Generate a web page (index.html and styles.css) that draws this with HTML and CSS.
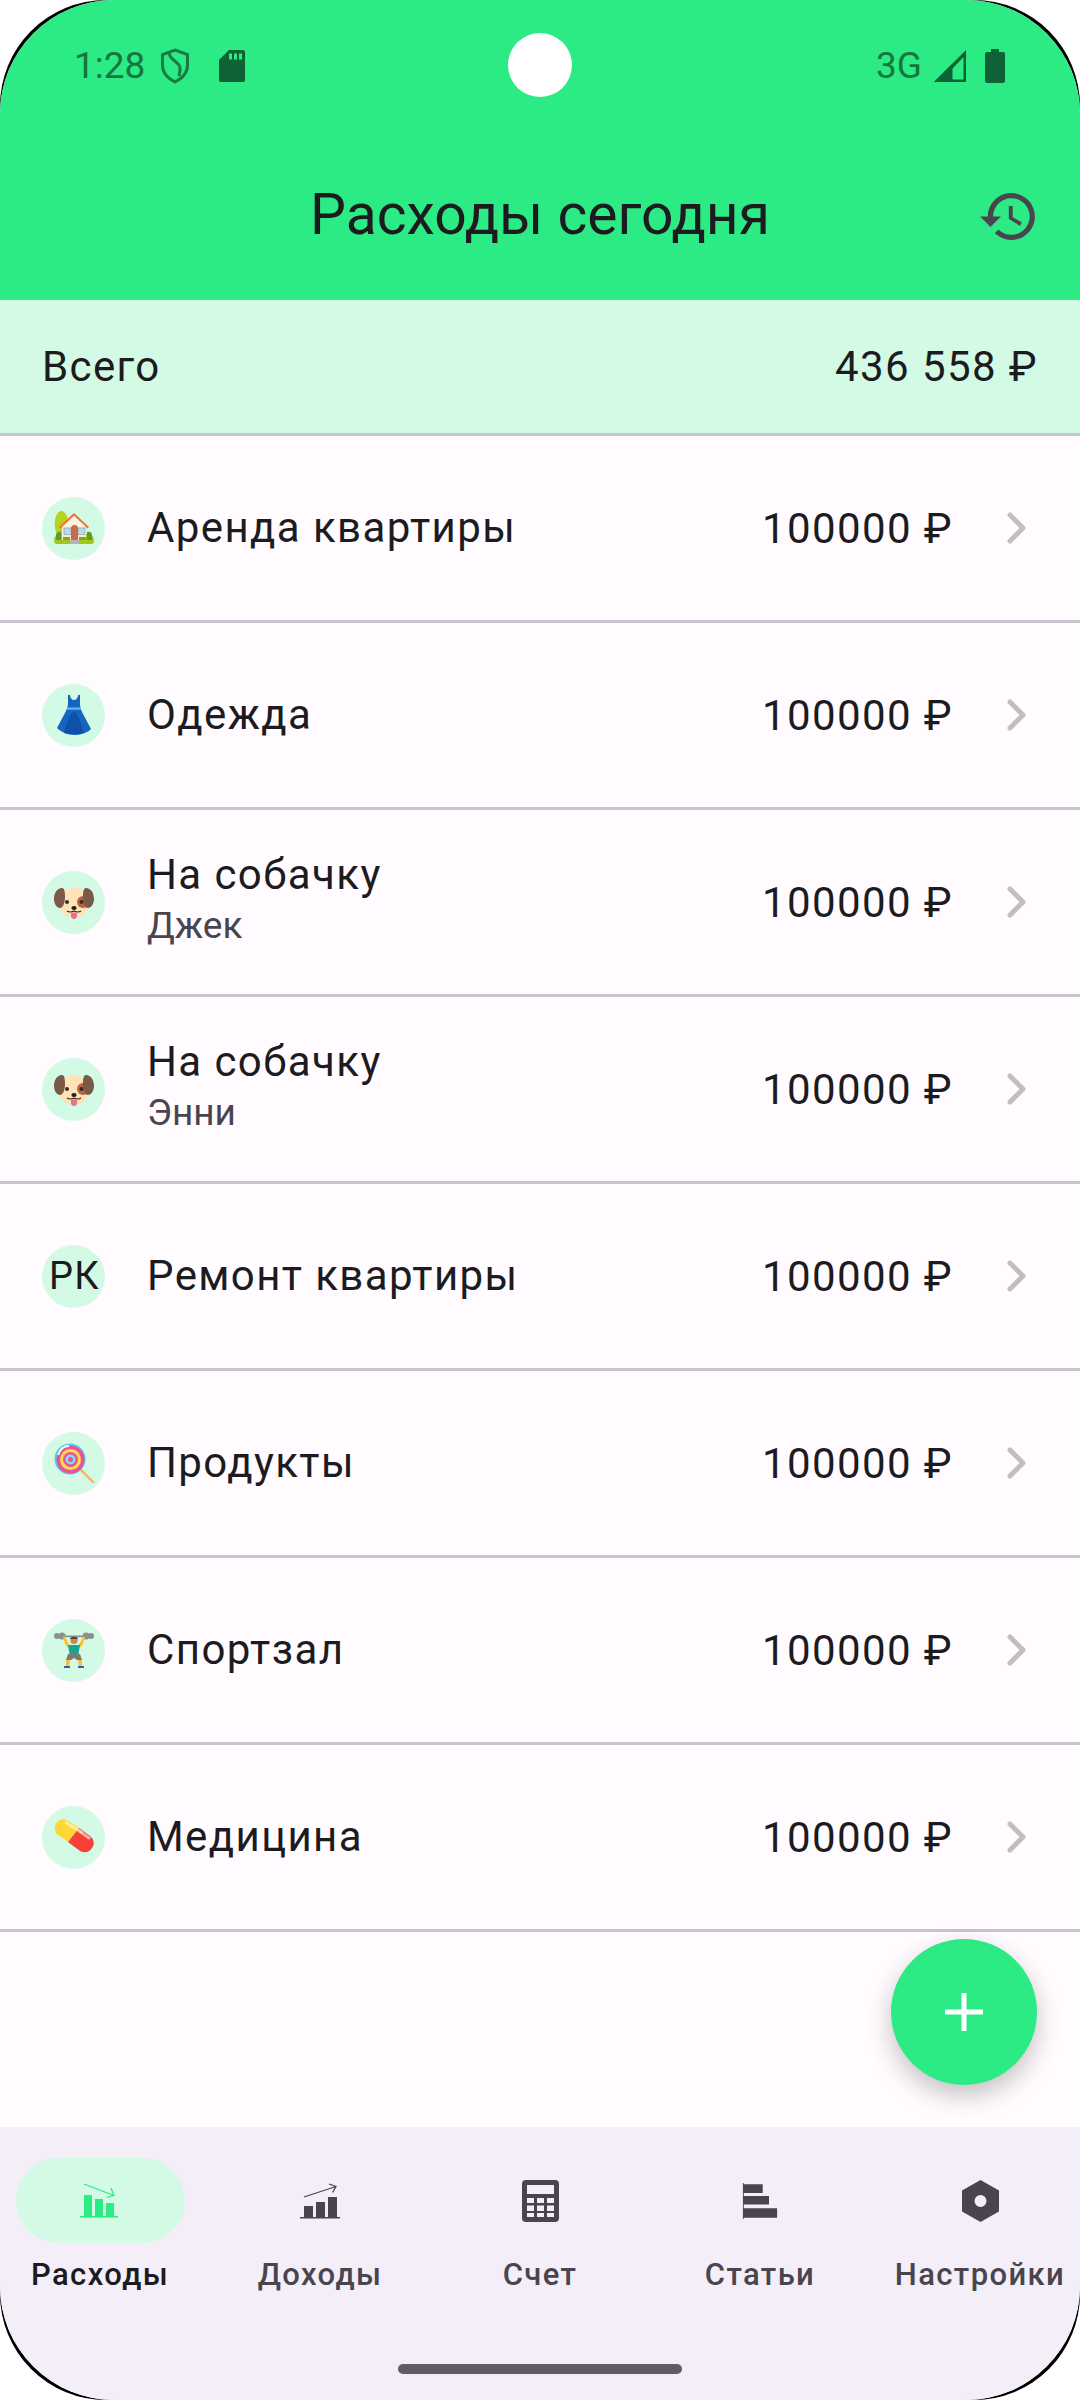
FILE: index.html
```html
<!DOCTYPE html>
<html lang="ru">
<head>
<meta charset="utf-8">
<title>Расходы сегодня</title>
<link rel="stylesheet" href="styles.css">
</head>
<body>
<svg class="defs" width="0" height="0" aria-hidden="true">
  <symbol id="e-house" viewBox="0 0 40 40">
    <ellipse cx="7.5" cy="16" rx="6.8" ry="13" fill="#b5d31c"/>
    <path d="M0 33c0-5 3-7 6-7h28c3 0 6 2 6 7 0 2-1 3-3 3H3c-2 0-3-1-3-3z" fill="#a4c61a"/>
    <path d="M2 27c0-3 3-4 5-3v8H2zM38 27c0-3-3-4-5-3v8h5z" fill="#5c9c2c"/>
    <rect x="8" y="16" width="24" height="16" fill="#fbeed7"/>
    <path d="M20 5 5 19l1.500 1.500L20 8l13.500 12.500L35 19z" fill="#f0732f"/>
    <path d="M20 8 9 18h22z" fill="#fdf3e3"/>
    <rect x="10" y="20" width="7" height="6.500" fill="#b5dcec" stroke="#8d9ba3" stroke-width=".7"/>
    <rect x="24" y="20" width="7" height="6.500" fill="#b5dcec" stroke="#8d9ba3" stroke-width=".7"/>
    <path d="M17 32V20c0-4 7-4 7 0v12z" fill="#c9694a"/>
    <rect x="16" y="32" width="9" height="4" fill="#b4b4b0"/>
    <path d="M9 29h7v3H9zM25 29h7v3h-7z" fill="#7fa32c"/>
  </symbol>
  <symbol id="e-dress" viewBox="0 0 40 40">
    <path d="M14 0h2c0 3 2 5 4 5s4-2 4-5h2v9c0 3 1 5 2 8l9 17c-4 4-11 6-17 6S7 37 3 33l9-17c1-3 2-5 2-7z" fill="#1565c0"/>
    <path d="M20 17c-4 0-8 15-10 21 3 1 6 1 10 1s7 0 10-1c-2-6-6-21-10-21z" fill="#0d52a8"/>
    <rect x="13" y="12.500" width="14" height="2.200" fill="#64b5f6"/>
  </symbol>
  <symbol id="e-dog" viewBox="0 0 40 40">
    <ellipse cx="20" cy="21" rx="15.500" ry="15" fill="#fde3b5"/>
    <circle cx="29" cy="20" r="6" fill="#b3673d"/>
    <path d="M8 6C3 6 0 11 0 17c0 5 3 9 6 9s5-5 5-11c0-3 0-9-3-9zM32 6c5 0 8 5 8 11 0 5-3 9-6 9s-5-5-5-11c0-3 0-9 3-9z" fill="#7b5848"/>
    <circle cx="13" cy="20" r="2" fill="#3a2a22"/>
    <circle cx="27.500" cy="20" r="2" fill="#3a2a22"/>
    <ellipse cx="20" cy="26" rx="2.600" ry="1.900" fill="#2b1d17"/>
    <path d="M13 29c3 2 5 1 7 0 2 1 4 2 7 0" fill="none" stroke="#2b1d17" stroke-width="1.200"/>
    <path d="M17 30.500h6V34c0 4-6 4-6 0z" fill="#ec6f8f"/>
  </symbol>
  <symbol id="e-candy" viewBox="0 0 40 40">
    <path d="m26 26 13 13" stroke="#efb36a" stroke-width="2.400" stroke-linecap="round"/>
    <circle cx="16" cy="16" r="15.500" fill="#4dd0e1"/>
    <circle cx="16.500" cy="16.500" r="14" fill="#ec4f9b"/>
    <circle cx="16.500" cy="16.500" r="10.500" fill="#fde047"/>
    <circle cx="16.500" cy="16.500" r="7.500" fill="#ec4f9b"/>
    <circle cx="16.500" cy="16.500" r="5" fill="#7bdff2"/>
    <circle cx="16.500" cy="16.500" r="2.500" fill="#ec4f9b"/>
    <path d="M4 12C6 6 10 3 15 3" fill="none" stroke="#fff" stroke-width="2"/>
  </symbol>
  <symbol id="e-lift" viewBox="0 0 40 40">
    <rect x="3" y="5.500" width="34" height="1.600" fill="#8a8a8a"/>
    <circle cx="3" cy="6" r="3" fill="#8e8e8e"/><circle cx="37" cy="6" r="3" fill="#8e8e8e"/>
    <circle cx="8" cy="6" r="3.500" fill="#8e8e8e"/><circle cx="32" cy="6" r="3.500" fill="#8e8e8e"/>
    <path d="m9 7 2-.5 4 8 1.500 1.500-2 2-3-3zM31 7l-2-.5-4 8-1.500 1.500 2 2 3-3z" fill="#fbc02d"/>
    <circle cx="20" cy="10.500" r="3.600" fill="#c98a4b"/>
    <path d="M16 9c0-3 8-3 8 0z" fill="#5d4037"/>
    <path d="M14 15h12l-1.500 9h-9z" fill="#14a68f"/>
    <path d="M14 24h12l2 6h-5l-3-2-3 2h-5z" fill="#7d7a72"/>
    <path d="M12 30h4l-1 6h-3zM24 30h4v6h-3z" fill="#fbc02d"/>
    <rect x="10" y="36" width="6" height="2" fill="#2f62b3"/><rect x="24" y="36" width="6" height="2" fill="#2f62b3"/>
  </symbol>
  <symbol id="e-pill" viewBox="0 0 40 40">
    <path d="M3 5c3-4 8-3 11-1l11 7-11 14-10-7C0 15 0 9 3 5z" fill="#fdd835"/>
    <path d="M25 11 36 19c4 3 5 8 2 12-3 5-8 5-12 3l-12-9z" fill="#f44336"/>
    <path d="M12 5.500 27 15" stroke="#fff4b0" stroke-width="3" stroke-linecap="round" opacity=".8"/>
    <path d="m28 16 7 5" stroke="#fff" stroke-width="3" stroke-linecap="round" opacity=".55"/>
  </symbol>
</svg>

<div class="device">
  <div class="screen">
    <header class="header">
      <div class="status">
        <div class="status-group">
          <span class="time">1:28</span>
          <svg class="i-shield" viewBox="0 0 30 36"><path d="M15 2 27.500 6.500V17c0 8-5.500 13.500-12.500 17C8 30.500 2.500 25 2.500 17V6.500z M9 4.500c0 4 3 6.500 7 9.500 4.500 3.400 5 7 3 14" fill="none" stroke="#177a47" stroke-width="3"/></svg>
          <svg class="i-sd" viewBox="0 0 26 32"><path d="M10 0h14a2 2 0 0 1 2 2v28a2 2 0 0 1-2 2H2a2 2 0 0 1-2-2V10z" fill="#0f6235"/><path d="M10 3.500h3v6h-3zM15 3.500h3v6h-3zM20 3.500h3v6h-3z" fill="#2ceb84"/></svg>
        </div>
        <div class="status-group">
          <span class="net">3G</span>
          <svg class="i-signal" viewBox="0 0 32 32"><path fill-rule="evenodd" d="M32 0v32H0zM29.500 7 8 29.500h21.500z" fill="#0f6235"/><path d="M0 32 18.500 13.500V32z" fill="#0f6235"/></svg>
          <svg class="i-batt" viewBox="0 0 20 34"><path d="M6 0h8v3h4a2 2 0 0 1 2 2v27a2 2 0 0 1-2 2H2a2 2 0 0 1-2-2V5a2 2 0 0 1 2-2h4z" fill="#0f6235"/></svg>
        </div>
      </div>
      <div class="appbar">
        <h1 class="title">Расходы сегодня</h1>
        <svg class="i-history" viewBox="1 3 21 18"><path d="M13 3c-4.970 0-9 4.030-9 9H1l3.890 3.890.07.140L9 12H6c0-3.870 3.130-7 7-7s7 3.130 7 7-3.130 7-7 7c-1.930 0-3.680-.79-4.940-2.060l-1.420 1.420C8.270 19.990 10.510 21 13 21c4.970 0 9-4.030 9-9s-4.030-9-9-9zm-1 5v5l4.280 2.540.72-1.210-3.500-2.080V8H12z" fill="#49454f"/></svg>
      </div>
    </header>
    <div class="camera"></div>

    <div class="total">
      <span>Всего</span>
      <span>436 558 ₽</span>
    </div>

    <main class="list">
      <div class="row">
        <div class="avatar"><svg class="emoji"><use href="#e-house"/></svg></div>
        <div class="names"><div class="name">Аренда квартиры</div></div>
        <div class="price">100000 ₽</div>
        <svg class="chev" viewBox="0 0 20 32"><path d="m3 3 13 13L3 29" fill="none" stroke="#c0bec1" stroke-width="5" stroke-linecap="round" stroke-linejoin="round"/></svg>
      </div>
      <div class="row">
        <div class="avatar"><svg class="emoji"><use href="#e-dress"/></svg></div>
        <div class="names"><div class="name">Одежда</div></div>
        <div class="price">100000 ₽</div>
        <svg class="chev" viewBox="0 0 20 32"><path d="m3 3 13 13L3 29" fill="none" stroke="#c0bec1" stroke-width="5" stroke-linecap="round" stroke-linejoin="round"/></svg>
      </div>
      <div class="row">
        <div class="avatar"><svg class="emoji"><use href="#e-dog"/></svg></div>
        <div class="names"><div class="name">На собачку</div><div class="sub">Джек</div></div>
        <div class="price">100000 ₽</div>
        <svg class="chev" viewBox="0 0 20 32"><path d="m3 3 13 13L3 29" fill="none" stroke="#c0bec1" stroke-width="5" stroke-linecap="round" stroke-linejoin="round"/></svg>
      </div>
      <div class="row">
        <div class="avatar"><svg class="emoji"><use href="#e-dog"/></svg></div>
        <div class="names"><div class="name">На собачку</div><div class="sub">Энни</div></div>
        <div class="price">100000 ₽</div>
        <svg class="chev" viewBox="0 0 20 32"><path d="m3 3 13 13L3 29" fill="none" stroke="#c0bec1" stroke-width="5" stroke-linecap="round" stroke-linejoin="round"/></svg>
      </div>
      <div class="row">
        <div class="avatar avatar-text">РК</div>
        <div class="names"><div class="name">Ремонт квартиры</div></div>
        <div class="price">100000 ₽</div>
        <svg class="chev" viewBox="0 0 20 32"><path d="m3 3 13 13L3 29" fill="none" stroke="#c0bec1" stroke-width="5" stroke-linecap="round" stroke-linejoin="round"/></svg>
      </div>
      <div class="row">
        <div class="avatar"><svg class="emoji"><use href="#e-candy"/></svg></div>
        <div class="names"><div class="name">Продукты</div></div>
        <div class="price">100000 ₽</div>
        <svg class="chev" viewBox="0 0 20 32"><path d="m3 3 13 13L3 29" fill="none" stroke="#c0bec1" stroke-width="5" stroke-linecap="round" stroke-linejoin="round"/></svg>
      </div>
      <div class="row">
        <div class="avatar"><svg class="emoji"><use href="#e-lift"/></svg></div>
        <div class="names"><div class="name">Спортзал</div></div>
        <div class="price">100000 ₽</div>
        <svg class="chev" viewBox="0 0 20 32"><path d="m3 3 13 13L3 29" fill="none" stroke="#c0bec1" stroke-width="5" stroke-linecap="round" stroke-linejoin="round"/></svg>
      </div>
      <div class="row">
        <div class="avatar"><svg class="emoji"><use href="#e-pill"/></svg></div>
        <div class="names"><div class="name">Медицина</div></div>
        <div class="price">100000 ₽</div>
        <svg class="chev" viewBox="0 0 20 32"><path d="m3 3 13 13L3 29" fill="none" stroke="#c0bec1" stroke-width="5" stroke-linecap="round" stroke-linejoin="round"/></svg>
      </div>
    </main>

    <button class="fab" aria-label="Добавить">
      <svg class="i-plus" viewBox="0 0 38 38"><path d="M16.500 0h5v16.500H38v5H21.500V38h-5V21.500H0v-5h16.500z" fill="#fff"/></svg>
    </button>

    <nav class="nav">
      <div class="tab tab-active">
        <div class="pill">
          <svg class="tab-icon" viewBox="0 0 40 36" fill="#2ceb84">
            <path d="M4 12h8v21H4zM15 16h8v17h-8zM26 20h8v13h-8zM0 33h38v1.500H0z"/>
            <path d="M4 1 34 12.500M27 14.500l7-2.200L31 5" fill="none" stroke="#2ceb84" stroke-width="1.300"/>
          </svg>
        </div>
        <span class="tab-label">Расходы</span>
      </div>
      <div class="tab">
        <div class="pill">
          <svg class="tab-icon" viewBox="0 0 40 36" fill="#49454f">
            <path d="M4 23h9v11H4zM16 19h9v15h-9zM28 14h9v20h-9zM0 34h40v1.500H0z"/>
            <path d="M4 14 36 3.500M29 1l7 2.500-3.500 6" fill="none" stroke="#49454f" stroke-width="1.300"/>
          </svg>
        </div>
        <span class="tab-label">Доходы</span>
      </div>
      <div class="tab">
        <div class="pill">
          <svg class="tab-icon i-calc" viewBox="0 0 37 42"><path fill-rule="evenodd" fill="#49454f" d="M4 0h29a4 4 0 0 1 4 4v34a4 4 0 0 1-4 4H4a4 4 0 0 1-4-4V4a4 4 0 0 1 4-4zM5 5v9h27V5zM5 18v5h7v-5zM15 18v5h7v-5zM25 18v5h7v-5zM5 25.500V31h7v-5.500zM15 25.500V31h7v-5.500zM25 25.500V31h7v-5.500zM5 33v4h7v-4zM15 33v4h7v-4zM25 33v4h7v-4z"/></svg>
        </div>
        <span class="tab-label">Счет</span>
      </div>
      <div class="tab">
        <div class="pill">
          <svg class="tab-icon" viewBox="0 0 38 40" fill="#49454f"><path d="M0 0h1v40H0zM1 1.500h21V11H1zM1 14.500h28V24H1zM1 28h37v10.500H1z"/></svg>
        </div>
        <span class="tab-label">Статьи</span>
      </div>
      <div class="tab">
        <div class="pill">
          <svg class="tab-icon i-hex" viewBox="0 0 37 42"><path fill-rule="evenodd" fill="#49454f" d="M18.500 0 37 10.500v21L18.500 42 0 31.500v-21zM18.500 15a6 6 0 1 0 0 12 6 6 0 0 0 0-12z"/></svg>
        </div>
        <span class="tab-label">Настройки</span>
      </div>
      <div class="home"></div>
    </nav>
  </div>
</div>
</body>
</html>
```

FILE: styles.css
```css
* { box-sizing: border-box; }

html, body {
  margin: 0;
  padding: 0;
  background: #fff;
}

.defs { position: absolute; }

.device {
  width: 1080px;
  height: 2400px;
  background: #000;
  border-radius: 106px;
  overflow: hidden;
}

.screen {
  position: relative;
  width: 1080px;
  height: 2400px;
  display: flex;
  flex-direction: column;
  background: #fffbfe;
  border-radius: 114px;
  overflow: hidden;
  font-family: Roboto, "Liberation Sans", sans-serif;
  color: #1c1b1f;
}

.header {
  height: 300px;
  flex: none;
  background: #2ceb84;
  display: flex;
  flex-direction: column;
}

.status {
  height: 132px;
  flex: none;
  padding: 48px 75px 0 74px;
  display: flex;
  justify-content: space-between;
  align-items: flex-start;
}

.status-group {
  display: flex;
  align-items: center;
  height: 36px;
}

.time, .net {
  font-size: 37px;
  line-height: 36px;
  color: #14773f;
}

.i-shield { width: 30px; height: 36px; margin-left: 15px; }
.i-sd { width: 26px; height: 32px; margin-left: 29px; }
.i-signal { width: 32px; height: 32px; margin-left: 12px; }
.i-batt { width: 20px; height: 34px; margin-left: 19px; }

.camera {
  position: absolute;
  left: 508px;
  top: 33px;
  width: 64px;
  height: 64px;
  border-radius: 50%;
  background: #fff;
}

.appbar {
  position: relative;
  flex: 1;
  display: flex;
  justify-content: center;
  align-items: flex-start;
}

.title {
  margin: 47px 0 0;
  font-size: 57px;
  line-height: 72px;
  font-weight: 400;
}

.i-history {
  position: absolute;
  left: 980px;
  top: 61px;
  width: 55px;
  height: 47px;
}

.total {
  height: 136px;
  flex: none;
  padding: 0 42px;
  background: #d3fae5;
  border-bottom: 3px solid #cac4d0;
  display: flex;
  justify-content: space-between;
  align-items: center;
  font-size: 42px;
  letter-spacing: 1.400px;
}

.list { flex: 1; }

.row {
  height: 187px;
  padding: 0 53px 0 42px;
  border-bottom: 3px solid #cac4d0;
  display: flex;
  align-items: center;
}

.avatar {
  width: 63px;
  height: 63px;
  flex: none;
  border-radius: 50%;
  background: #d3fae5;
  display: flex;
  align-items: center;
  justify-content: center;
}

.avatar-text {
  padding-left: 2px;
  font-size: 38px;
  letter-spacing: 1.400px;
}

.emoji {
  width: 40px;
  height: 40px;
}

.names {
  flex: 1;
  margin-left: 42px;
}

.name {
  font-size: 42px;
  line-height: 52px;
  letter-spacing: 1.400px;
}

.sub {
  margin: 3px 0 7px;
  font-size: 37px;
  line-height: 44px;
  color: #49454f;
}

.price {
  font-size: 42px;
  letter-spacing: 1.400px;
}

.chev {
  width: 20px;
  height: 32px;
  margin-left: 54px;
  flex: none;
}

.fab {
  position: absolute;
  left: 891px;
  top: 1939px;
  width: 146px;
  height: 146px;
  padding: 0;
  border: 0;
  border-radius: 50%;
  background: #2ceb84;
  box-shadow: 0 10px 26px rgba(0, 0, 0, .24);
  display: flex;
  align-items: center;
  justify-content: center;
}

.i-plus { width: 38px; height: 38px; }

.nav {
  position: relative;
  height: 273px;
  flex: none;
  background: #f3eef8;
  display: grid;
  grid-template-columns: repeat(5, 220px);
  justify-content: center;
  align-items: start;
}

.tab {
  padding-top: 31px;
  display: flex;
  flex-direction: column;
  align-items: center;
}

.pill {
  width: 169px;
  height: 85px;
  border-radius: 43px;
  display: flex;
  align-items: center;
  justify-content: center;
}

.tab-active .pill { background: #d3fae5; }

.tab-icon { width: 40px; height: 36px; }
.i-calc, .i-hex { width: 37px; height: 42px; }

.tab-label {
  margin-top: 12px;
  font-size: 31px;
  line-height: 40px;
  font-weight: 500;
  letter-spacing: 1.400px;
  color: #49454f;
  white-space: nowrap;
}

.tab-active .tab-label { color: #1c1b1f; }

.home {
  position: absolute;
  left: 398px;
  top: 237px;
  width: 284px;
  height: 10px;
  border-radius: 5px;
  background: #605d62;
}
```
